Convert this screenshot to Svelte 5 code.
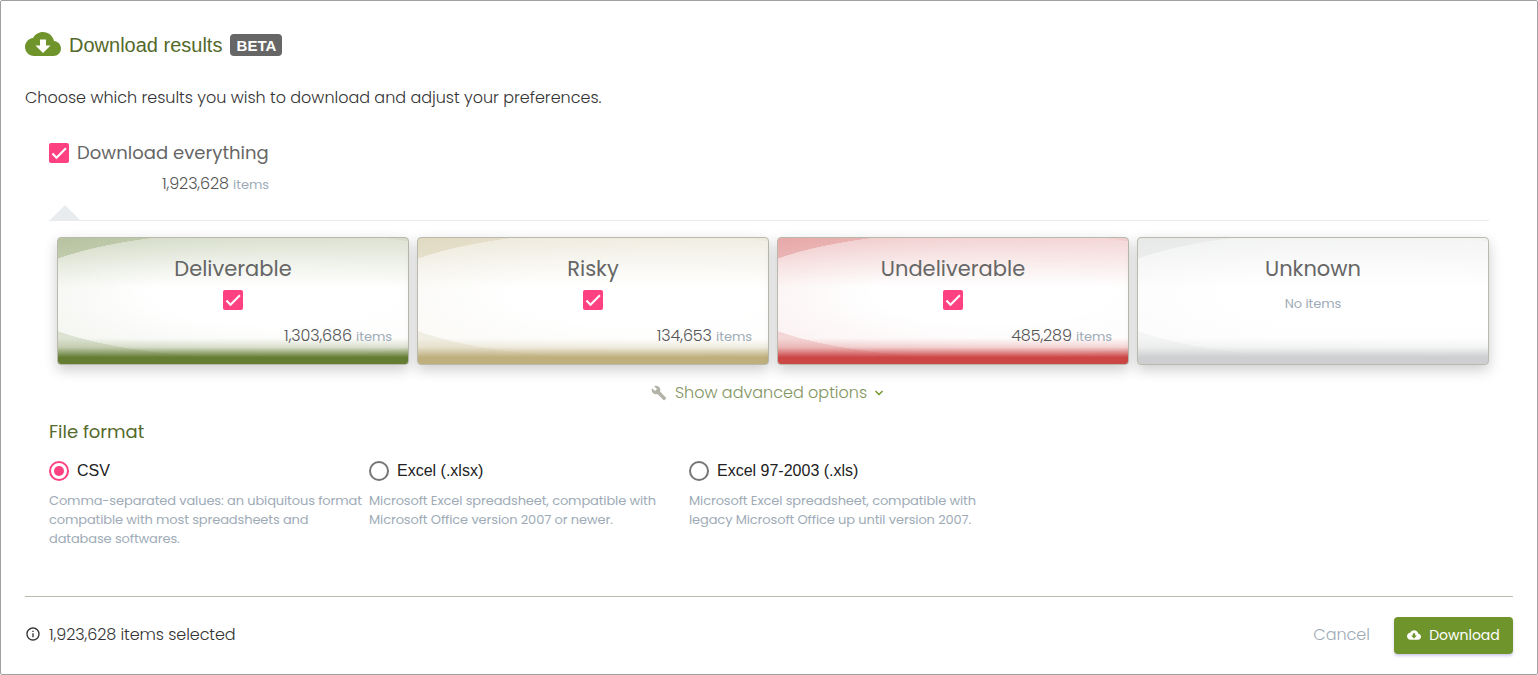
<script>
  let everything = true
  let format = 'csv'

  const total = '1,923,628'

  let groups = [
    { id: 'deliverable', title: 'Deliverable', count: '1,303,686', checked: true },
    { id: 'risky', title: 'Risky', count: '134,653', checked: true },
    { id: 'undeliverable', title: 'Undeliverable', count: '485,289', checked: true },
    { id: 'unknown', title: 'Unknown', count: null, checked: false }
  ]

  const formats = [
    { id: 'csv', label: 'CSV', lines: ['Comma-separated values: an ubiquitous format', 'compatible with most spreadsheets and', 'database softwares.'] },
    { id: 'xlsx', label: 'Excel (.xlsx)', lines: ['Microsoft Excel spreadsheet, compatible with', 'Microsoft Office version 2007 or newer.'] },
    { id: 'xls', label: 'Excel 97-2003 (.xls)', lines: ['Microsoft Excel spreadsheet, compatible with', 'legacy Microsoft Office up until version 2007.'] }
  ]

  function toggleAll() {
    groups = groups.map(g => ({ ...g, checked: g.count ? everything : false }))
  }
</script>

<main class="dialog">
  <header>
    <svg class="cloud" viewBox="0 4 24 16">
      <path d="M19.35 10.04C18.67 6.59 15.64 4 12 4 9.11 4 6.6 5.64 5.35 8.04 2.34 8.36 0 10.91 0 14c0 3.31 2.69 6 6 6h13c2.76 0 5-2.24 5-5 0-2.64-2.05-4.78-4.65-4.96zM17 13l-5 5-5-5h3V9h4v4h3z" />
    </svg>
    <h1>Download results</h1>
    <span class="badge">BETA</span>
  </header>

  <p class="intro">Choose which results you wish to download and adjust your preferences.</p>

  <section>
    <div class="everything">
      <label>
        <input type="checkbox" bind:checked={everything} on:change={toggleAll} />
        <span class="box" class:on={everything}>
          <svg viewBox="0 0 24 24"><path d="M4.1 12.7 9 17.6 20.3 6.3" /></svg>
        </span>
        <span class="everything-label">Download everything</span>
      </label>
      <p class="count">{total} <small>items</small></p>
    </div>

    <div class="divider">
      <svg viewBox="0 0 32 16"><path d="M0 16 16 0 32 16z" /></svg>
    </div>

    <div class="cards">
      {#each groups as group}
        <div class="card {group.id}">
          <h2>{group.title}</h2>
          {#if group.count}
            <label>
              <input type="checkbox" bind:checked={group.checked} />
              <span class="box" class:on={group.checked}>
                <svg viewBox="0 0 24 24"><path d="M4.1 12.7 9 17.6 20.3 6.3" /></svg>
              </span>
            </label>
            <p class="count">{group.count} <small>items</small></p>
          {:else}
            <p class="empty">No items</p>
          {/if}
        </div>
      {/each}
    </div>

    <button class="advanced">
      <svg class="wrench" viewBox="0 0 24 24">
        <path d="M22.7 19l-9.1-9.1c.9-2.3.4-5-1.5-6.9-2-2-5-2.4-7.4-1.3L9 6 6 9 1.6 4.7C.4 7.1.9 10.1 2.9 12.1c1.9 1.9 4.6 2.4 6.9 1.5l9.1 9.1c.4.4 1 .4 1.4 0l2.3-2.3c.5-.4.5-1.1.1-1.4z" />
      </svg>
      <span>Show advanced options</span>
      <svg class="chevron" viewBox="0 0 10 10"><path d="M1.5 3 5 6.5 8.5 3" /></svg>
    </button>

    <h3>File format</h3>
    <div class="formats">
      {#each formats as item}
        <div class="format">
          <label>
            <input type="radio" bind:group={format} value={item.id} />
            <span class="radio" class:on={format === item.id}></span>
            <span>{item.label}</span>
          </label>
          <p>
            {#each item.lines as line}
              <span>{line}</span>
            {/each}
          </p>
        </div>
      {/each}
    </div>
  </section>

  <footer>
    <svg class="info" viewBox="0 0 24 24">
      <path d="M11 7h2v2h-2zm0 4h2v6h-2zm1-9C6.48 2 2 6.48 2 12s4.48 10 10 10 10-4.48 10-10S17.52 2 12 2zm0 18c-4.41 0-8-3.59-8-8s3.59-8 8-8 8 3.59 8 8-3.59 8-8 8z" />
    </svg>
    <span class="selected">{total} items selected</span>
    <button class="cancel">Cancel</button>
    <button class="download">
      <svg viewBox="0 4 24 16">
        <path d="M19.35 10.04C18.67 6.59 15.64 4 12 4 9.11 4 6.6 5.64 5.35 8.04 2.34 8.36 0 10.91 0 14c0 3.31 2.69 6 6 6h13c2.76 0 5-2.24 5-5 0-2.64-2.05-4.78-4.65-4.96zM17 13l-5 5-5-5h3V9h4v4h3z" />
      </svg>
      <span>Download</span>
    </button>
  </footer>
</main>

<style>
  :global(body) {
    background: #fff;
  }
  .dialog {
    box-sizing: border-box;
    display: flex;
    flex-direction: column;
    width: 1538px;
    height: 675px;
    padding: 24px 24px 0;
    border: 1px solid #a0a0a0;
    border-radius: 2px;
    font-family: Poppins, "Open Sans", sans-serif;
    font-size: 16px;
    font-weight: 300;
    line-height: 24px;
    color: #333;
    white-space: nowrap;
  }
  h1, h2, h3, p {
    margin: 0;
    font-weight: 400;
  }
  p {
    font-weight: 300;
  }
  label {
    display: flex;
    align-items: center;
    cursor: pointer;
  }
  input {
    position: absolute;
    opacity: 0;
    pointer-events: none;
  }
  button {
    padding: 0;
    border: 0;
    background: none;
    font: inherit;
    cursor: pointer;
  }
  header {
    display: flex;
    align-items: center;
    height: 40px;
  }
  .cloud {
    width: 36px;
    height: 24px;
    margin: 0 8px 2px 0;
    fill: #70942c;
  }
  h1 {
    font-family: "Liberation Sans", Arial, sans-serif;
    font-size: 20px;
    color: #54692b;
  }
  .badge {
    box-sizing: border-box;
    width: 52px;
    height: 22px;
    margin-left: 8px;
    border-radius: 4px;
    background: #666;
    color: #fff;
    font: bold 15px/23px "Liberation Sans", Arial, sans-serif;
    text-align: center;
  }
  .intro {
    margin-top: 21px;
    letter-spacing: -0.015px;
  }
  section {
    padding: 33px 24px 0;
  }
  .everything {
    width: 220px;
  }
  .everything label {
    height: 20px;
  }
  .everything-label {
    margin-left: 8px;
    font-size: 18px;
    font-weight: 400;
    letter-spacing: 0.04px;
    color: #666;
  }
  .everything .count {
    margin-top: 9px;
  }
  .box {
    display: block;
    width: 20px;
    height: 20px;
    box-sizing: border-box;
    border: 2px solid #757575;
    border-radius: 2px;
  }
  .box svg {
    display: none;
    width: 20px;
    height: 20px;
    fill: none;
    stroke: #fff;
    stroke-width: 2.6;
  }
  .box.on {
    border: 0;
    background: #ff4081;
  }
  .box.on svg {
    display: block;
  }
  .count {
    text-align: right;
    letter-spacing: -0.13px;
    color: #555;
  }
  .count small, .empty {
    font-size: 13px;
    font-weight: 400;
    letter-spacing: -0.05px;
    color: #9eabb7;
  }
  .divider {
    height: 15px;
    margin-top: 8px;
    border-bottom: 1px solid #e9ecee;
  }
  .divider svg {
    display: block;
    width: 32px;
    height: 16px;
    fill: #e9ecee;
  }
  .cards {
    display: flex;
    gap: 8px;
    margin-top: 16px;
    padding-left: 8px;
  }
  .card {
    --tone: 100 125 51;
    box-sizing: border-box;
    display: flex;
    flex-direction: column;
    align-items: center;
    width: 352px;
    height: 128px;
    padding: 15px 16px 0;
    border: 1px solid #b9b9ad;
    border-radius: 4px;
    box-shadow: 0 5px 14px rgba(0, 0, 0, 0.2);
    background:
      linear-gradient(rgb(var(--tone) / 0) 79%, rgb(var(--tone) / 0.22) 86%, rgb(var(--tone)) 94%),
      linear-gradient(rgb(var(--tone) / 0.2), rgb(var(--tone) / 0) 39%),
      radial-gradient(256px 64px at 60% 45.2%, #fff 45%, rgba(255, 255, 255, 0.72) 99.6%, rgba(255, 255, 255, 0) 100%),
      radial-gradient(400px 240px at 0 0, rgb(var(--tone) / 0.34), rgb(var(--tone) / 0.05)),
      #fff;
    background-origin: border-box;
  }
  .risky {
    --tone: 190 175 125;
  }
  .undeliverable {
    --tone: 204 70 70;
  }
  .unknown {
    --tone: 205 207 208;
  }
  .card h2 {
    margin-bottom: 5px;
    font-size: 21px;
    line-height: 32px;
    color: #666;
  }
  .card .count {
    align-self: stretch;
    margin-top: 14px;
  }
  .empty {
    margin-top: 2px;
  }
  .advanced {
    display: flex;
    align-items: center;
    height: 24px;
    margin: 16px auto 0;
    padding-right: 3px;
    color: #829460;
  }
  .wrench {
    width: 16px;
    height: 16px;
    margin: 0 8px 1px 0;
    fill: #b3b3aa;
  }
  .chevron {
    width: 10px;
    height: 10px;
    margin: 0 0 1px 7px;
    fill: none;
    stroke: #70942c;
    stroke-width: 1.4;
  }
  h3 {
    margin-top: 15px;
    font-size: 18px;
    color: #54692b;
  }
  .formats {
    display: flex;
    margin-top: 17px;
  }
  .format {
    width: 320px;
  }
  .format label {
    height: 20px;
    gap: 8px;
    font-family: "Liberation Sans", Arial, sans-serif;
    font-weight: 400;
    color: #212121;
  }
  .radio {
    display: flex;
    box-sizing: border-box;
    width: 20px;
    height: 20px;
    border: 2px solid #757575;
    border-radius: 50%;
  }
  .radio.on {
    border-color: #ff4081;
  }
  .radio.on::after {
    content: "";
    width: 10px;
    height: 10px;
    margin: auto;
    border-radius: 50%;
    background: #ff4081;
  }
  .format p {
    margin-top: 10px;
    font-size: 13px;
    font-weight: 400;
    line-height: 19px;
    letter-spacing: -0.12px;
    color: #9eabb7;
  }
  .format p span {
    display: block;
  }
  footer {
    display: flex;
    align-items: center;
    margin-top: auto;
    padding: 20px 0;
    border-top: 1px solid #b9b9ad;
  }
  .info {
    width: 16px;
    height: 16px;
    margin: 0 8px 3px 0;
    fill: #333;
  }
  .selected {
    margin-bottom: 2px;
    letter-spacing: -0.08px;
  }
  .cancel {
    margin: 0 0 2px auto;
    color: #9eabb7;
  }
  .download {
    display: flex;
    align-items: center;
    justify-content: center;
    box-sizing: border-box;
    width: 119px;
    height: 37px;
    margin-left: 24px;
    padding-bottom: 1px;
    border-radius: 4px;
    background: #70942c;
    box-shadow: 0 2px 3px rgba(60, 50, 180, 0.25);
    color: #fff;
    font-size: 14px;
    font-weight: 400;
  }
  .download svg {
    width: 14px;
    height: 10px;
    margin-right: 8px;
    fill: #fff;
  }
</style>
